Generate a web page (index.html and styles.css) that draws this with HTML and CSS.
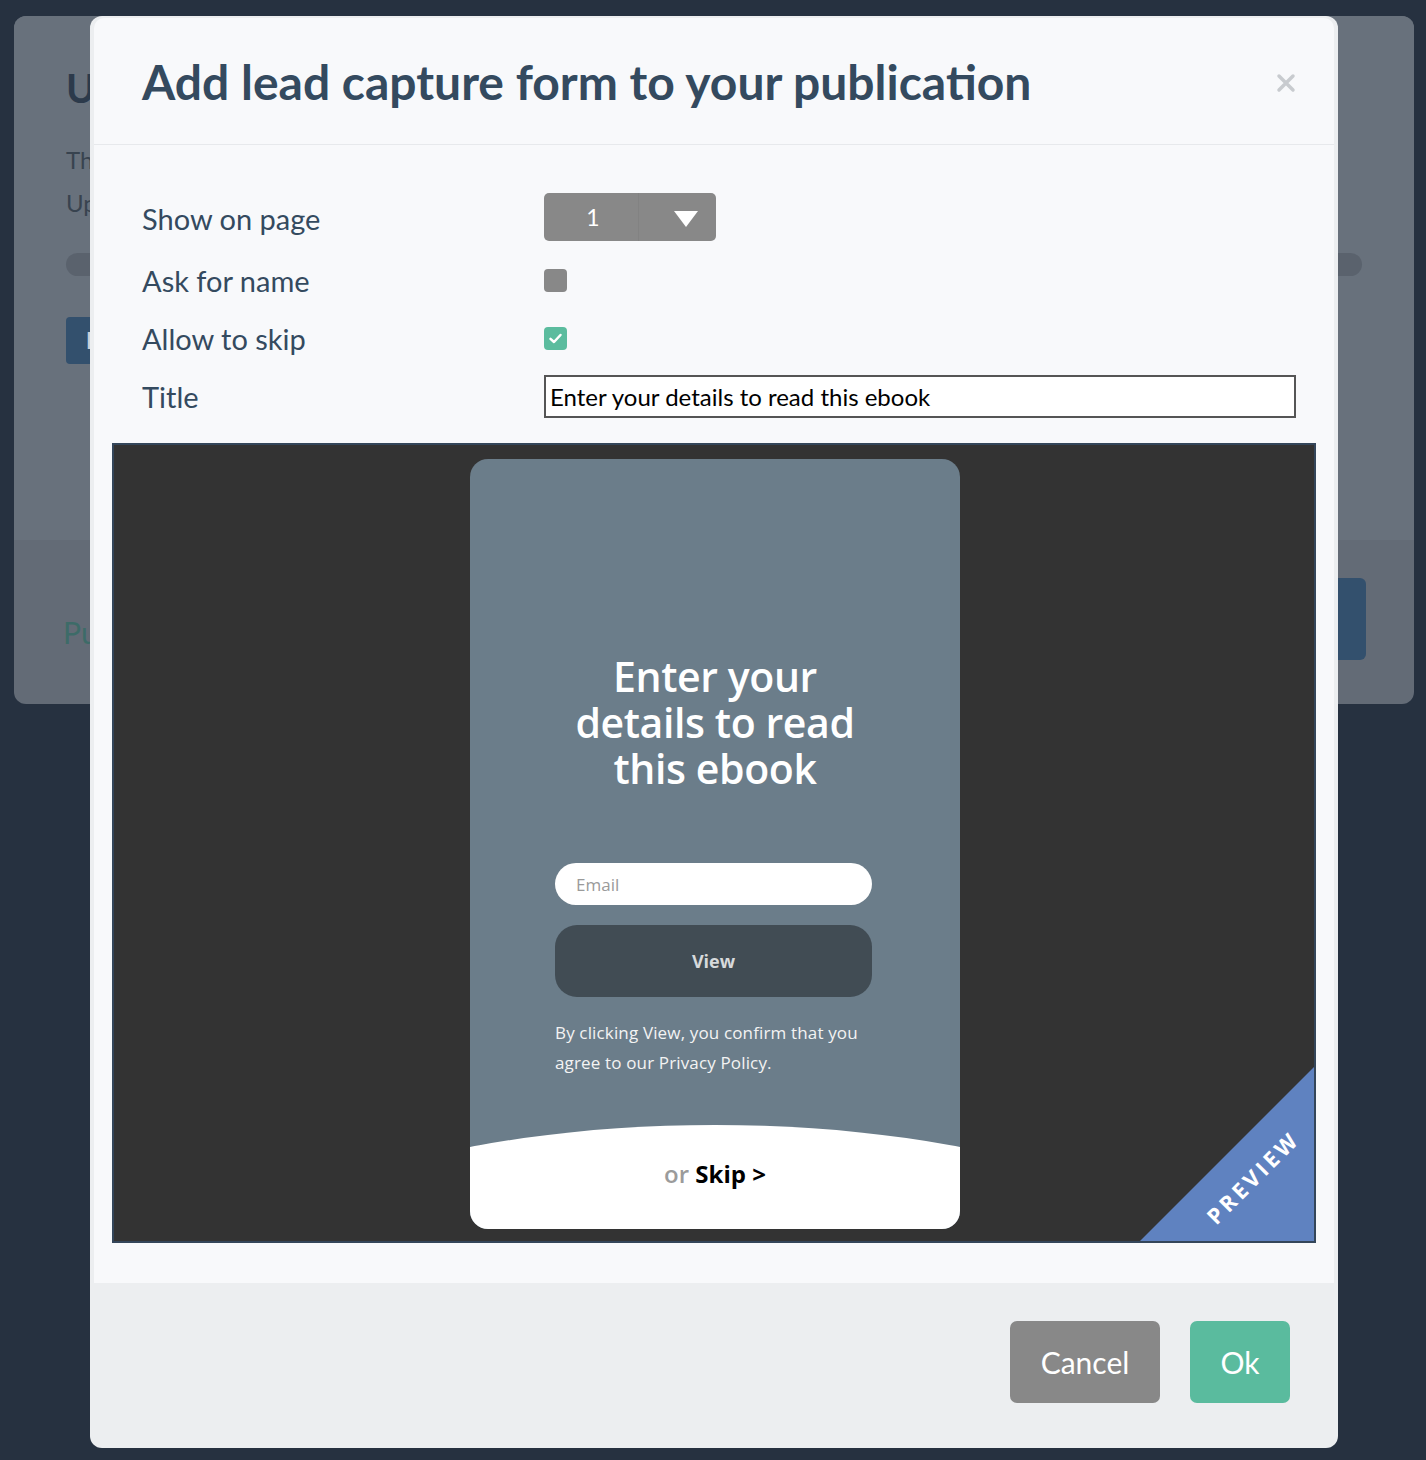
FILE: index.html
```html
<!DOCTYPE html>
<html lang="en">
<head>
    <meta charset="UTF-8">
    <meta name="viewport" content="width=device-width, initial-scale=1.0">
    <title>Add lead capture form</title>
    <link rel="stylesheet" href="styles.css">
</head>
<body>
    <!-- page behind the dialog -->
    <div class="page">
        <div class="card">
            <div class="card-top">
                <h1>Up</h1>
                <p>The file</p>
                <p>Upload</p>
                <div class="bar"></div>
                <button class="blue-btn">B</button>
            </div>
            <div class="card-bottom">
                <span class="link">Publish</span>
                <button class="blue-btn big">Continue</button>
            </div>
        </div>
    </div>

    <div class="modal">
        <div class="modal-main">
            <div class="modal-header">
                <h2>Add lead capture form to your publication</h2>
                <svg class="close" width="20" height="20" viewBox="0 0 20 20">
                    <path d="M3 3 L17 17 M17 3 L3 17" stroke="#c8cbcf" stroke-width="3.5" stroke-linecap="round"/>
                </svg>
            </div>
            <div class="modal-body">
                <div class="form">
                    <div class="row first">
                        <label>Show on page</label>
                        <div class="select">
                            <span class="select-value">1</span>
                            <span class="select-arrow">
                                <svg width="24" height="16" viewBox="0 0 24 16"><polygon points="0,0 24,0 12,16" fill="#fff"/></svg>
                            </span>
                        </div>
                    </div>
                    <div class="row">
                        <label>Ask for name</label>
                        <span class="check"></span>
                    </div>
                    <div class="row">
                        <label>Allow to skip</label>
                        <span class="check on">
                            <svg width="23" height="23" viewBox="0 0 23 23"><polyline points="6.5,11.8 10,15 16.5,8" fill="none" stroke="#fff" stroke-width="2.5" stroke-linecap="round" stroke-linejoin="round"/></svg>
                        </span>
                    </div>
                    <div class="row">
                        <label>Title</label>
                        <input class="title-input" type="text" value="Enter your details to read this ebook">
                    </div>
                </div>

                <div class="preview">
                    <div class="lead-card">
                        <div class="lead-body">
                            <h3>Enter your<br>details to read<br>this ebook</h3>
                            <input class="email" type="text" placeholder="Email">
                            <button class="view-btn">View</button>
                            <p class="note">By clicking View, you confirm that you<br>agree to our Privacy Policy.</p>
                        </div>
                        <div class="skip">
                            <span class="or">or</span> <b>Skip &gt;</b>
                        </div>
                    </div>
                    <div class="ribbon"></div>
                    <span class="ribbon-text">PREVIEW</span>
                </div>
            </div>
        </div>
        <div class="modal-footer">
            <button class="btn cancel">Cancel</button>
            <button class="btn ok">Ok</button>
        </div>
    </div>
</body>
</html>
```

FILE: styles.css
```css
* {
    box-sizing: border-box;
    margin: 0;
    padding: 0;
}
body {
    background: #263140;
    font-family: 'Lato', 'Open Sans', sans-serif;
    width: 1426px;
    height: 1460px;
    overflow: hidden;
    position: relative;
}
button {
    font-family: inherit;
    border: none;
}

/* background page */
.page {
    padding: 16px 12px 0 14px;
}
.card {
    width: 1400px;
    height: 688px;
    border-radius: 12px;
    background: #636b76;
    overflow: hidden;
}
.card-top {
    height: 524px;
    padding: 48px 52px 0;
    background: #68717c;
}
.card-top h1 {
    font-size: 40px;
    line-height: 48px;
    color: #2c3a4b;
}
.card-top p {
    font-size: 24px;
    line-height: 43px;
    color: #38434f;
}
.card-top h1 + p {
    margin-top: 26px;
}
.bar {
    margin-top: 29px;
    height: 23px;
    border-radius: 12px;
    background: #5a626d;
}
.blue-btn {
    margin-top: 41px;
    height: 47px;
    padding: 0 20px;
    border-radius: 4px;
    background: #33506d;
    color: #c9d0d8;
    font-size: 22px;
    font-weight: 700;
}
.card-bottom {
    display: flex;
    justify-content: space-between;
    align-items: flex-start;
    padding: 0 48px 0 49px;
}
.link {
    margin-top: 76px;
    font-size: 30px;
    line-height: 32px;
    color: #3d6b68;
}
.blue-btn.big {
    margin-top: 38px;
    height: 82px;
    width: 160px;
    border-radius: 6px;
}

/* dialog */
.modal {
    position: absolute;
    top: 16px;
    left: 90px;
    width: 1248px;
    height: 1432px;
    background: #eceef0;
    border-radius: 12px;
    overflow: hidden;
    display: flex;
    flex-direction: column;
}
.modal-main {
    margin: 2px 4px 0;
    background: #f8f9fb;
    border-radius: 10px 10px 0 0;
}
.modal-header {
    height: 127px;
    display: flex;
    align-items: center;
    justify-content: space-between;
    padding: 0 38px 0 48px;
    border-bottom: 1px solid #e7e9ec;
}
.modal-header h2 {
    font-size: 48px;
    font-weight: 700;
    color: #344a5f;
}
.close {
    margin-top: 4px;
}
.modal-body {
    padding: 48px 0 40px;
}
.form {
    padding: 0 38px 0 48px;
}
.row {
    display: grid;
    grid-template-columns: 402px 1fr;
    align-items: center;
    height: 58px;
}
.row.first {
    height: 48px;
    margin-bottom: 10px;
}
.row label {
    font-size: 29px;
    color: #344a5f;
}
.row.first label {
    padding-top: 2px;
}
.select {
    display: flex;
    width: 172px;
    height: 48px;
    border-radius: 5px;
    background: #888888;
    color: #fff;
}
.select-value {
    width: 95px;
    display: flex;
    align-items: center;
    justify-content: center;
    padding-left: 4px;
    font-size: 23px;
    border-right: 1px solid #828282;
}
.select-arrow {
    flex: 1;
    display: flex;
    align-items: center;
    justify-content: center;
    padding: 3px 0 0 17px;
}
.check {
    width: 23px;
    height: 23px;
    border-radius: 4px;
    background: #888888;
    margin-top: 1px;
}
.check.on {
    background: #5bbc9e;
}
.check svg {
    display: block;
}
.title-input {
    width: 752px;
    height: 43px;
    border: 2px solid #555555;
    background: #fff;
    padding: 0 4px;
    font-family: 'Lato', sans-serif;
    font-size: 24px;
    color: #000;
    outline: none;
}

/* preview */
.preview {
    position: relative;
    margin: 18px 18px 0;
    height: 800px;
    border: 2px solid #34465a;
    background: #333333;
    overflow: hidden;
    display: flex;
    justify-content: center;
    padding: 14px 0 0 2px;
}
.lead-card {
    width: 490px;
    height: 770px;
    border-radius: 18px;
    background: #6b7d8a;
    overflow: hidden;
    display: flex;
    flex-direction: column;
    font-family: 'Open Sans', sans-serif;
}
.lead-body {
    flex: 1;
    padding: 194px 0 0 85px;
}
.lead-body h3 {
    width: 320px;
    text-align: center;
    font-size: 41px;
    line-height: 46px;
    font-weight: 600;
    color: #fff;
    letter-spacing: -0.4px;
}
.email {
    display: block;
    margin-top: 72px;
    width: 317px;
    height: 42px;
    border: none;
    border-radius: 21px;
    background: #fff;
    padding-left: 21px;
    font-family: 'Open Sans', sans-serif;
    font-size: 17px;
    outline: none;
}
.email::placeholder {
    color: #9a9a9a;
}
.view-btn {
    display: block;
    margin-top: 20px;
    width: 317px;
    height: 72px;
    border-radius: 22px;
    background: #414c54;
    color: #d6d9db;
    font-family: 'Open Sans', sans-serif;
    font-size: 18px;
    font-weight: 700;
}
.note {
    margin-top: 21px;
    font-size: 17px;
    line-height: 30px;
    letter-spacing: 0.15px;
    color: #f3f3f3;
    white-space: nowrap;
}
.skip {
    position: relative;
    height: 104px;
    padding-top: 33px;
    text-align: center;
    font-size: 24px;
    line-height: 32px;
    color: #000;
}
.skip::before {
    content: "";
    position: absolute;
    top: 0;
    left: 50%;
    width: 1000px;
    height: 344px;
    margin-left: -500px;
    border-radius: 50%;
    background: #fff;
}
.skip span, .skip b {
    position: relative;
}
.skip .or {
    color: #9b9b9b;
    font-weight: 600;
}
.skip b {
    font-weight: 700;
}
.ribbon {
    position: absolute;
    right: 0;
    bottom: 0;
    width: 174px;
    height: 174px;
    background: #5f82c0;
    clip-path: polygon(100% 0, 100% 100%, 0 100%);
}
.ribbon-text {
    position: absolute;
    right: 62px;
    bottom: 64px;
    transform: translate(50%, 50%) rotate(-45deg);
    font-family: 'Open Sans', sans-serif;
    font-size: 22px;
    font-weight: 700;
    letter-spacing: 3.5px;
    color: #fff;
}

/* footer */
.modal-footer {
    flex: 1;
    display: flex;
    justify-content: flex-end;
    gap: 30px;
    padding: 38px 48px 0 0;
}
.btn {
    height: 82px;
    border-radius: 7px;
    color: #fff;
    font-size: 30px;
}
.cancel {
    width: 150px;
    background: #888888;
}
.ok {
    width: 100px;
    background: #5abb9e;
}
```
